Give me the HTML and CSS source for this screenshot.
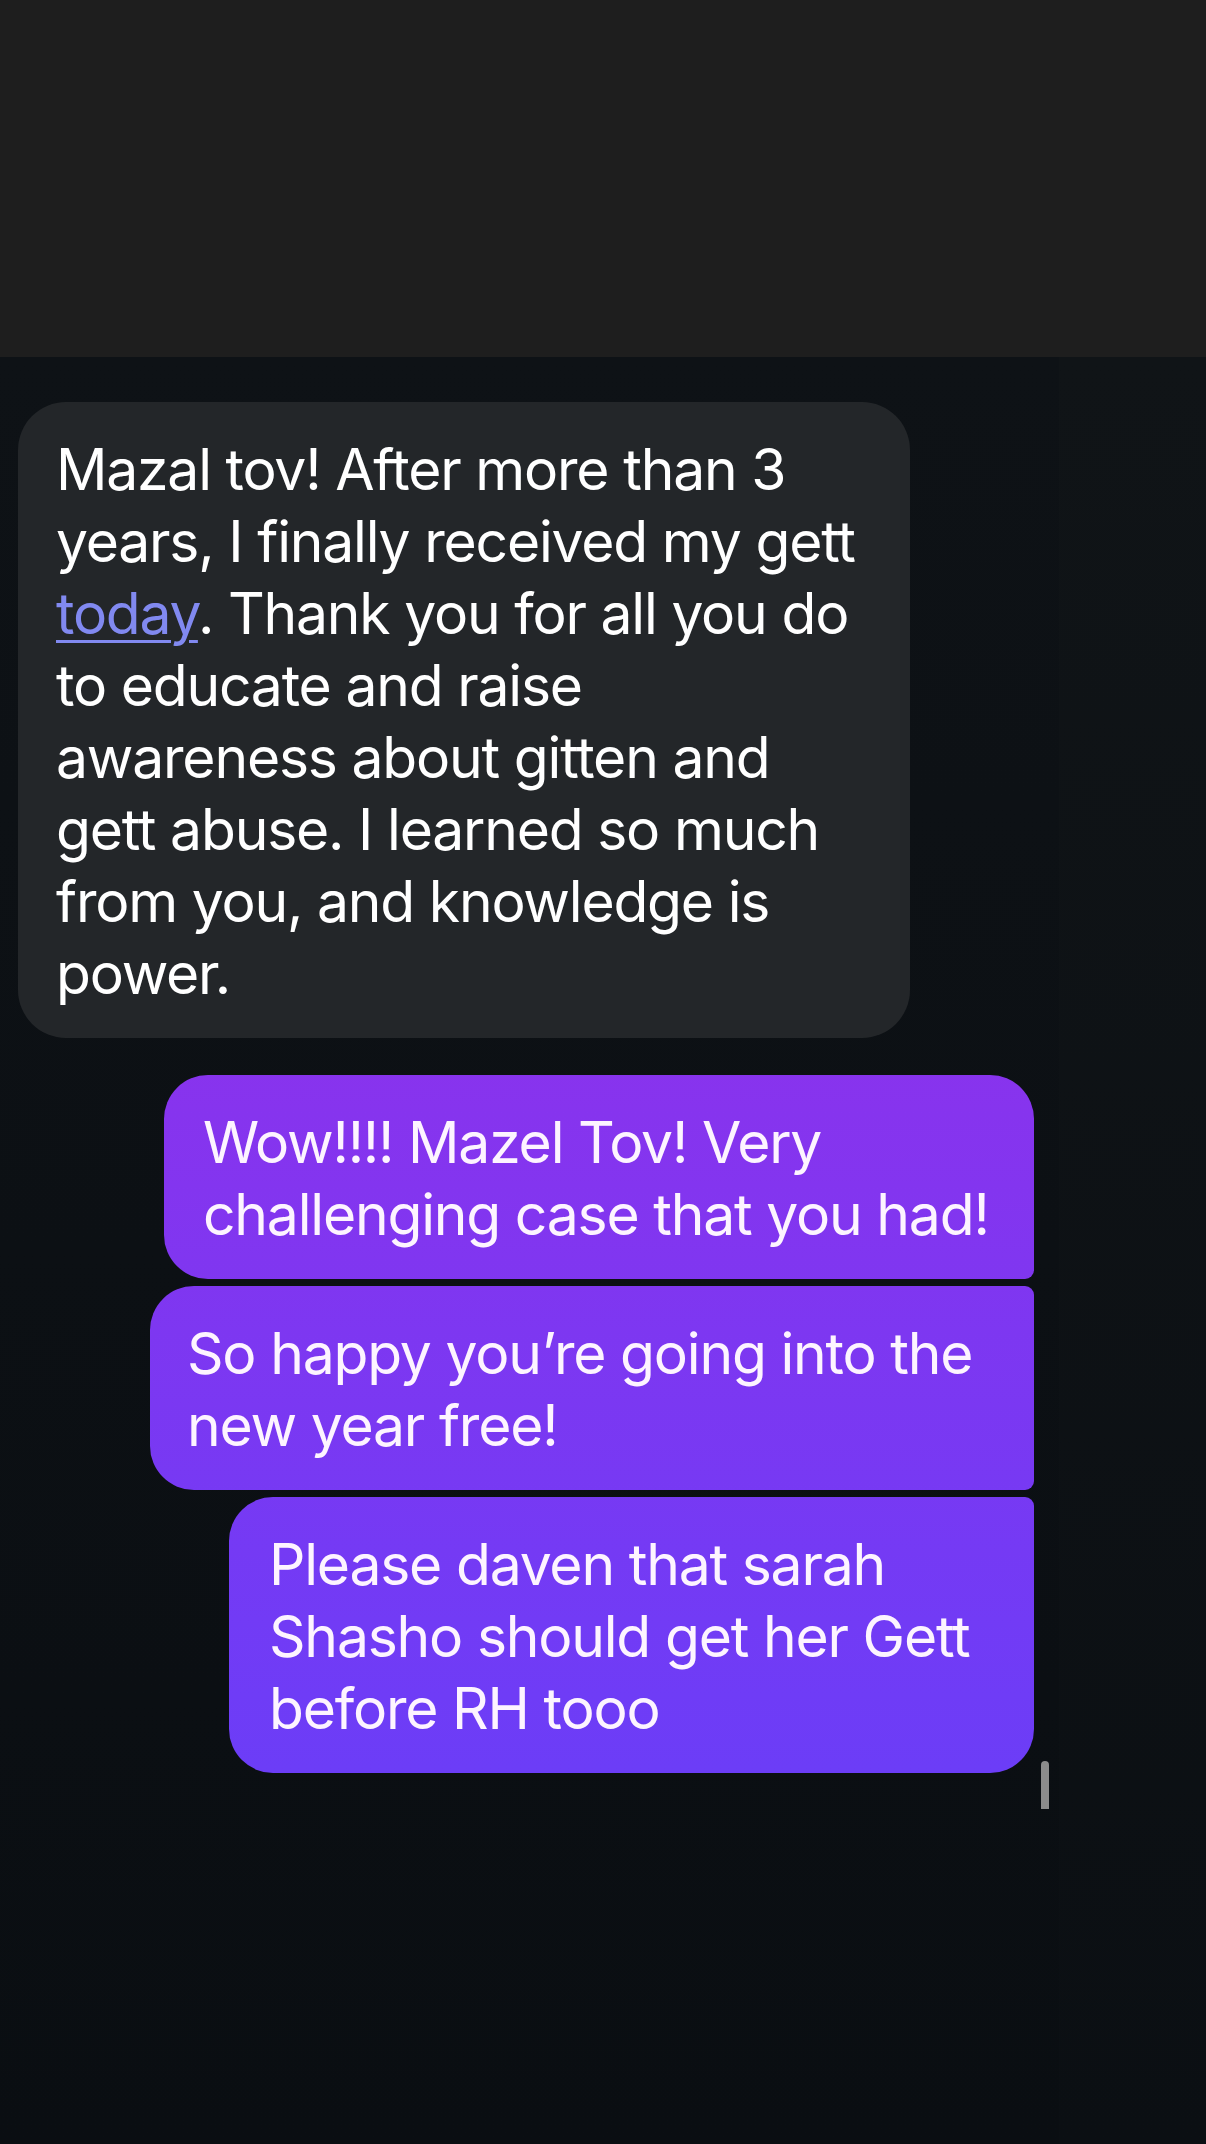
FILE: index.html
```html
<!DOCTYPE html>
<html>
<head>
  <title>Messages</title>
  <meta charset="UTF-8" />
  <meta name="viewport" content="width=device-width, initial-scale=1.0"/>
  <link rel="stylesheet" href="styles.css">
</head>
<body>
  <div class="top-bar"></div>

  <div class="screen">
    <div class="chat">
      <div class="thread">
        <div class="bubble incoming">
          Mazal tov! After more than 3<br>
          years, I finally received my gett<br>
          <a href="#" class="link">today</a>. Thank you for all you do<br>
          to educate and raise<br>
          awareness about gitten and<br>
          gett abuse. I learned so much<br>
          from you, and knowledge is<br>
          power.
        </div>

        <div class="outgoing-group">
          <div class="bubble outgoing first">
            Wow!!!! Mazel Tov! Very<br>
            challenging case that you had!
          </div>
          <div class="bubble outgoing middle">
            So happy you’re going into the<br>
            new year free!
          </div>
          <div class="bubble outgoing last">
            Please daven that sarah<br>
            Shasho should get her Gett<br>
            before RH tooo
          </div>
        </div>
      </div>
      <div class="scroll-thumb"></div>
    </div>
    <div class="side"></div>
  </div>
</body>
</html>
```

FILE: styles.css
```css
:root {
  --top-bg: #1e1e1e;
  --chat-bg: #0d1115;
  --side-bg: #0f1317;
  --incoming: #232629;
  --link: #8189f0;
  --text: #ffffff;
}
html, body {
  margin: 0;
  padding: 0;
}
body {
  background: var(--chat-bg);
  color: var(--text);
  font-family: Inter, "Noto Sans", sans-serif;
  min-height: 2144px;
  display: flex;
  flex-direction: column;
}
.top-bar {
  height: 357px;
  background: var(--top-bg);
}
.screen {
  flex: 1;
  display: flex;
}
.chat {
  position: relative;
  width: 1059px;
  background: linear-gradient(to bottom, #0e1216, #0a0e12);
}
.side {
  flex: 1;
  background: linear-gradient(to bottom, #101417, #0b0f13);
}
.thread {
  display: flex;
  flex-direction: column;
  padding: 45px 25px 0 18px;
}
.bubble {
  box-sizing: border-box;
  padding: 32px 40px 28px;
  font-size: 57px;
  line-height: 72px;
  letter-spacing: -1.2px;
  white-space: nowrap;
}
.incoming {
  width: 892px;
  padding-left: 38px;
  background: var(--incoming);
  border-radius: 48px;
}
.link {
  color: var(--link);
  text-decoration: underline;
  text-decoration-thickness: 3px;
  text-underline-offset: 6px;
}
.outgoing-group {
  display: flex;
  flex-direction: column;
  align-items: flex-end;
  gap: 7px;
  margin-top: 37px;
}
.outgoing {
  color: #fdf4ff;
  background: linear-gradient(to bottom, #8c32ec 45%, #693ef8 86%);
  background-attachment: fixed;
}
.outgoing.first {
  width: 870px;
  padding-left: 39px;
  border-radius: 44px 44px 9px 44px;
}
.outgoing.middle {
  width: 884px;
  padding-left: 37px;
  border-radius: 44px 9px 9px 44px;
}
.outgoing.last {
  width: 805px;
  height: 276px;
  border-radius: 44px 9px 44px 44px;
}
.scroll-thumb {
  position: absolute;
  left: 1041px;
  top: 1404px;
  width: 8px;
  height: 48px;
  background: #8c8c8c;
  border-radius: 4px 4px 0 0;
}
```
